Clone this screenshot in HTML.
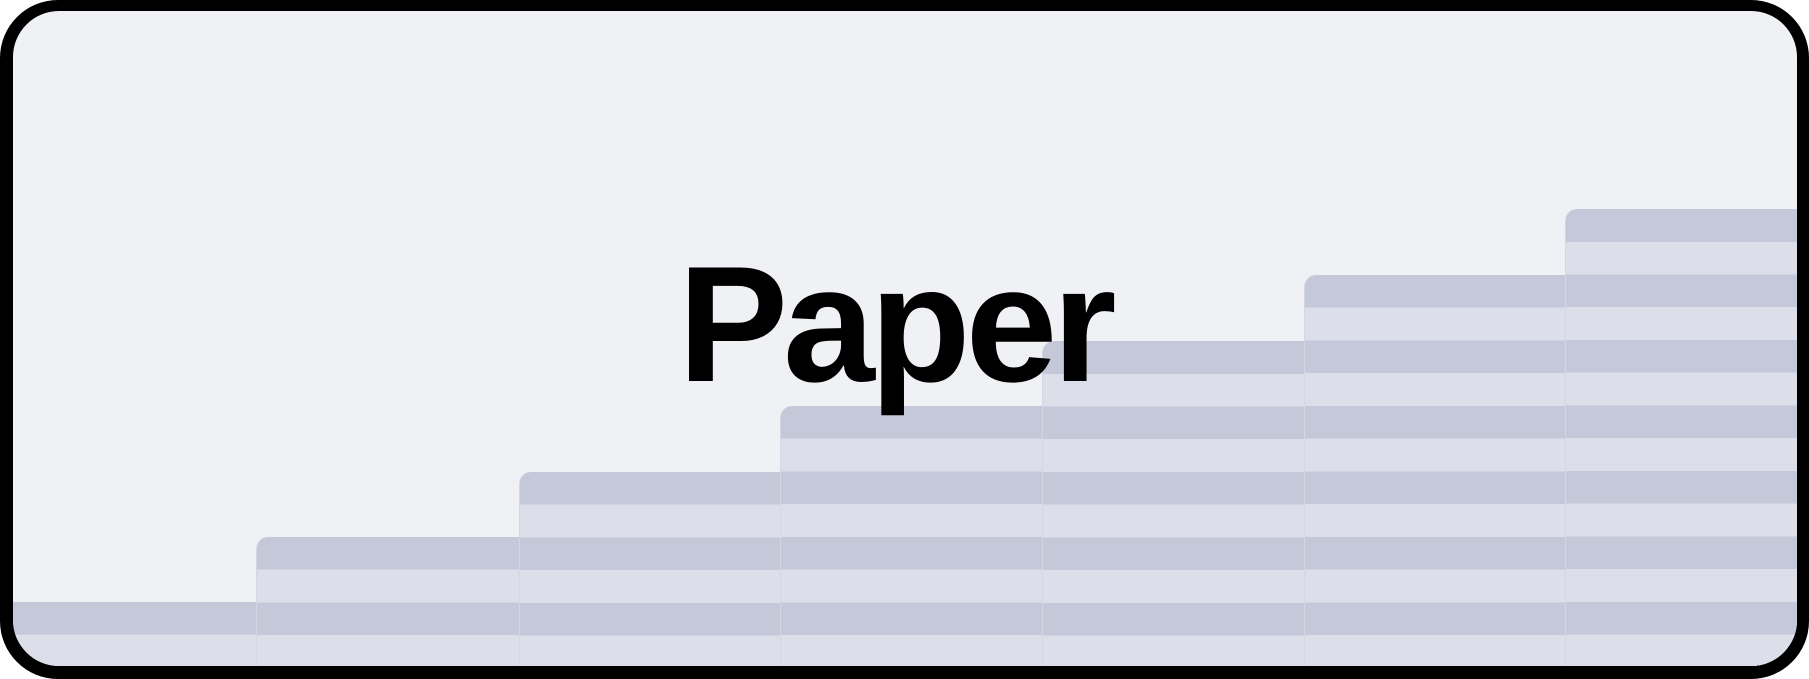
<!DOCTYPE html>
<html><head><meta charset="utf-8"><style>
html,body{margin:0;padding:0;}
body{width:1809px;height:679px;background:#fff;position:relative;overflow:hidden;}
.frame{position:absolute;left:0;top:0;width:1809px;height:679px;background:#000;border-radius:58px;}
.inner{position:absolute;left:13px;top:11px;right:12px;bottom:13px;background:#f0f1f5;border-radius:46px;overflow:hidden;z-index:0;}
.s{position:absolute;right:0;bottom:0;border-top-left-radius:12px;background:repeating-linear-gradient(#c5c8d9 0 32.75px,#dcdee9 32.75px 65.5px);border-left:1px solid #d4d6e3;}
.t{position:absolute;z-index:1;left:665px;top:231px;white-space:nowrap;font-family:"Liberation Sans",sans-serif;font-weight:bold;font-size:165px;color:#000;line-height:165px;letter-spacing:-5px;}
</style></head><body>
<div class="frame"><div class="inner">
<div class="s" style="left:-13px;top:591px;border-radius:0;border:0"></div>
<div class="s" style="left:243px;top:526px"></div>
<div class="s" style="left:506px;top:461px"></div>
<div class="s" style="left:767px;top:395px"></div>
<div class="s" style="left:1029px;top:330px"></div>
<div class="s" style="left:1291px;top:264px"></div>
<div class="s" style="left:1552px;top:198px"></div>
<div class="t">Paper</div>
</div></div>
</body></html>
